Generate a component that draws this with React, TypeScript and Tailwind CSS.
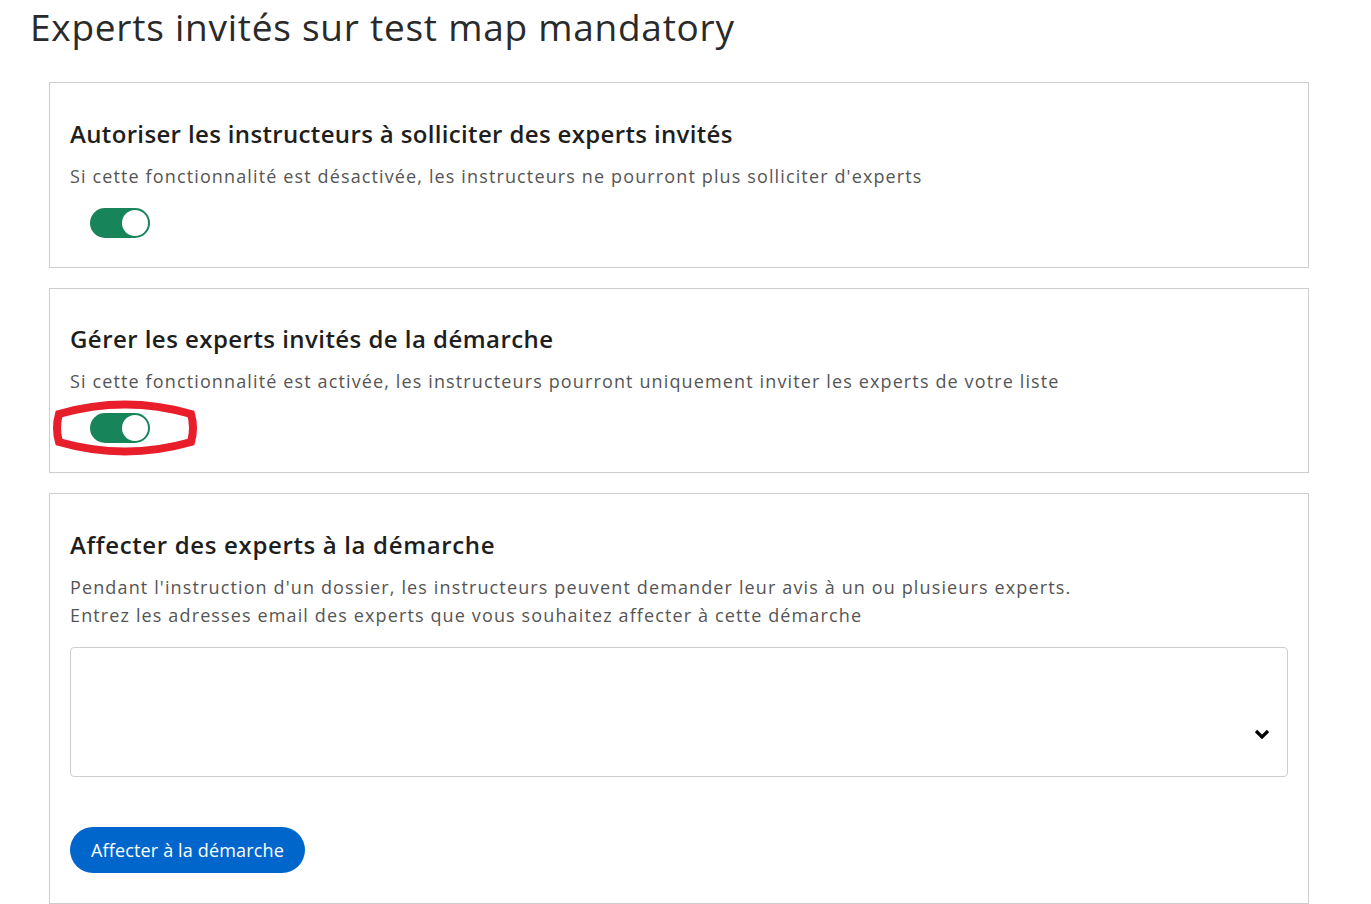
function Toggle({ annotated }: { annotated?: boolean }) {
  return (
    <div className="relative ml-5 h-[30px] w-[60px]">
      <div className="flex h-[30px] w-[60px] items-center justify-end rounded-full bg-[#18845a] pr-[2px]">
        <div className="h-[26px] w-[26px] rounded-full bg-white" />
      </div>
      {annotated && (
        <svg
          className="pointer-events-none absolute left-[-39px] top-[-15px]"
          width="148"
          height="60"
          viewBox="0 0 148 60"
        >
          <path
            d="M8 16 Q74 -3 140 16 Q144 30 140 44 Q74 63 8 44 Q4 30 8 16 Z"
            fill="none"
            stroke="#e81f2a"
            strokeWidth="8"
          />
        </svg>
      )}
    </div>
  );
}

function Card({ children, className = "" }: { children: React.ReactNode; className?: string }) {
  return (
    <section className={"border border-[#cecece] bg-white px-5 " + className}>
      {children}
    </section>
  );
}

export default function App() {
  return (
    <main
      className="min-h-screen bg-white pl-[30px] text-[#1e1e1e]"
      style={{ fontFamily: '"Open Sans", "Lato", sans-serif' }}
    >
      <h1 className="pt-[5px] text-[37px] leading-[44px] tracking-[0.75px] text-[#2a2a2a]">
        Experts invités sur test map mandatory
      </h1>

      <div className="ml-[19px] mt-[33px] flex w-[1260px] flex-col gap-5">
        <Card className="pb-[29px] pt-[35px]">
          <h2 className="text-[24px] font-semibold leading-[32px] tracking-[0.35px]">
            Autoriser les instructeurs à solliciter des experts invités
          </h2>
          <p className="mt-3 text-[18px] leading-[28px] tracking-[1.13px] text-[#555]">
            Si cette fonctionnalité est désactivée, les instructeurs ne pourront plus solliciter d'experts
          </p>
          <div className="mt-[18px]">
            <Toggle />
          </div>
        </Card>

        <Card className="pb-[29px] pt-[34px]">
          <h2 className="text-[24px] font-semibold leading-[32px] tracking-[0.45px]">
            Gérer les experts invités de la démarche
          </h2>
          <p className="mt-3 text-[18px] leading-[28px] tracking-[1.13px] text-[#555]">
            Si cette fonctionnalité est activée, les instructeurs pourront uniquement inviter les experts de votre liste
          </p>
          <div className="mt-[18px]">
            <Toggle annotated />
          </div>
        </Card>

        <Card className="pb-[30px] pt-[35px]">
          <h2 className="text-[24px] font-semibold leading-[32px] tracking-[0.65px]">
            Affecter des experts à la démarche
          </h2>
          <p className="mt-3 text-[18px] leading-[28px] tracking-[1.13px] text-[#555]">
            Pendant l'instruction d'un dossier, les instructeurs peuvent demander leur avis à un ou plusieurs experts.
            <br />
            Entrez les adresses email des experts que vous souhaitez affecter à cette démarche
          </p>
          <div className="mt-[18px] flex h-[130px] items-end justify-end rounded border border-[#cecece] pb-[37px] pr-[17px]">
            <svg width="16" height="10" viewBox="0 0 16 10">
              <path d="M2 2 L8 8 L14 2" fill="none" stroke="#000" strokeWidth="3.2" />
            </svg>
          </div>
          <button className="mt-[50px] h-[46px] rounded-full bg-[#0066cc] px-[21px] text-[18px] tracking-[0.15px] text-white">
            Affecter à la démarche
          </button>
        </Card>
      </div>
    </main>
  );
}
